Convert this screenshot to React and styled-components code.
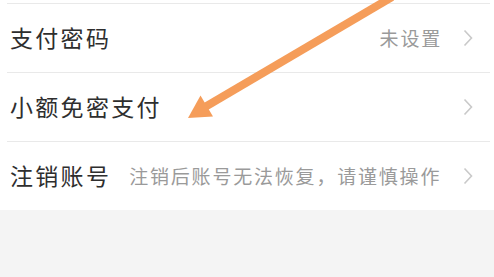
import React from 'react'
import styled, { createGlobalStyle } from 'styled-components'

const GlobalStyle = createGlobalStyle`
  html, body {
    margin: 0;
    padding: 0;
    background: #f4f4f4;
  }
  body {
    font-family: "Noto Sans CJK SC", "Noto Sans", sans-serif;
  }
`

const Page = styled.div`
  position: relative;
  width: 494px;
  height: 277px;
  overflow: hidden;
  background: #f4f4f4;
`

const List = styled.div`
  background: #ffffff;
  padding-top: 3px;
`

const Row = styled.div`
  display: flex;
  align-items: center;
  height: 69px;
  padding: 0 21px 0 10px;
  position: relative;

  &::before {
    content: '';
    position: absolute;
    top: 0;
    left: 7px;
    right: 4px;
    height: 1px;
    background: #e9e9e9;
  }
`

const Title = styled.span`
  font-size: 23px;
  letter-spacing: 2.3px;
  color: #2e2e2e;
  line-height: 1;
  white-space: nowrap;
`

const Note = styled.span`
  flex: 1;
  margin-left: 18px;
  font-size: 19px;
  letter-spacing: 1.8px;
  color: #9a9a9a;
  line-height: 1;
  white-space: nowrap;
  text-align: ${(p) => (p.right ? 'right' : 'left')};
`

const Spacer = styled.span`
  flex: 1;
`

const Chevron = styled.svg`
  width: 10px;
  height: 18px;
  margin-left: 21px;
  flex-shrink: 0;
`

const Arrow = styled.svg`
  position: absolute;
  left: 0;
  top: 0;
  pointer-events: none;
`

const ChevronIcon = () => (
  <Chevron viewBox="0 0 10 18">
    <path d="M1.5 1.5 L8.5 9 L1.5 16.5" fill="none" stroke="#c9c9c9" strokeWidth="1.6" />
  </Chevron>
)

const items = [
  { title: '支付密码', note: '未设置', right: true },
  { title: '小额免密支付' },
  { title: '注销账号', note: '注销后账号无法恢复，请谨慎操作' },
]

const App = () => (
  <Page>
    <GlobalStyle />
    <List>
      {items.map((item) => (
        <Row key={item.title}>
          <Title>{item.title}</Title>
          {item.note ? <Note right={item.right}>{item.note}</Note> : <Spacer />}
          <ChevronIcon />
        </Row>
      ))}
    </List>
    <Arrow width="494" height="277" viewBox="0 0 494 277">
      <line x1="392" y1="-3" x2="205" y2="107" stroke="#f59d5a" strokeWidth="8" />
      <polygon points="188,118 200.5,95.5 213,116.5" fill="#f59d5a" />
    </Arrow>
  </Page>
)

export default App
